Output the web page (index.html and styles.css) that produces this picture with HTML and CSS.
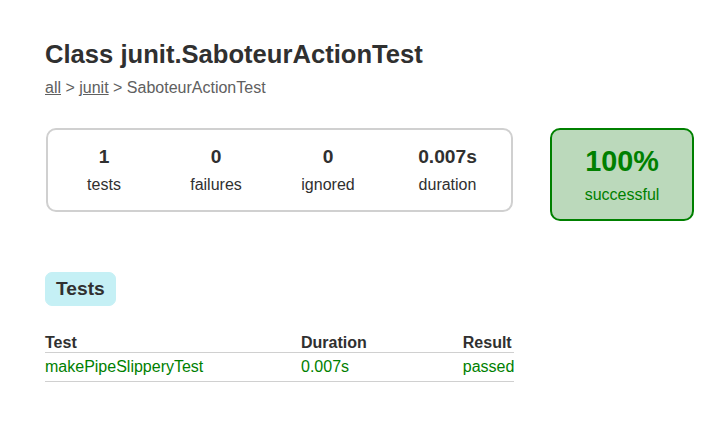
FILE: index.html
```html
<!DOCTYPE html>
<html>
<head>
<meta charset="utf-8">
<title>Test results - Class junit.SaboteurActionTest</title>
<link rel="stylesheet" href="styles.css">
</head>
<body>
<div class="content">
  <h1>Class junit.SaboteurActionTest</h1>
  <div class="breadcrumbs"><a href="#">all</a> &gt; <a href="#">junit</a> &gt; SaboteurActionTest</div>

  <div class="summary">
    <div class="summary-group">
      <div class="info-box">
        <div class="counter">1</div>
        <p>tests</p>
      </div>
      <div class="info-box">
        <div class="counter">0</div>
        <p>failures</p>
      </div>
      <div class="info-box">
        <div class="counter">0</div>
        <p>ignored</p>
      </div>
      <div class="info-box info-box-duration">
        <div class="counter">0.007s</div>
        <p>duration</p>
      </div>
    </div>
    <div class="info-box success-rate">
      <div class="percent">100%</div>
      <p>successful</p>
    </div>
  </div>

  <ul class="tab-links">
    <li class="tab-selected"><a href="#">Tests</a></li>
  </ul>

  <table class="tests">
    <thead>
      <tr><th>Test</th><th>Duration</th><th>Result</th></tr>
    </thead>
    <tbody>
      <tr class="success"><td>makePipeSlipperyTest</td><td>0.007s</td><td>passed</td></tr>
    </tbody>
  </table>
</div>
</body>
</html>
```

FILE: styles.css
```css
html, body {
  margin: 0;
  padding: 0;
  background: #ffffff;
}

body {
  font-family: "Liberation Sans", Arial, sans-serif;
  font-size: 16px;
  color: #303030;
}

a {
  color: #303030;
}

.content {
  padding: 40px 45px 30px;
}

h1 {
  font-size: 25.6px;
  font-weight: bold;
  margin: 0 0 10px;
  white-space: nowrap;
}

.breadcrumbs,
.breadcrumbs a {
  color: #606060;
}

.summary {
  display: flex;
  align-items: flex-start;
  margin: 30px 0 40px;
}

.summary-group {
  display: flex;
  flex-shrink: 0;
  margin: 1px;
  border: 2px solid #d0d0d0;
  border-radius: 10px;
}

.info-box {
  flex-shrink: 0;
  width: 110px;
  margin: 1px;
  padding: 15px 0;
  text-align: center;
}

.info-box p {
  margin: 0;
}

.info-box-duration {
  width: 125px;
}

.counter,
.percent {
  font-size: 19.2px;
  font-weight: bold;
  margin-bottom: 8px;
}

.success-rate {
  width: 140px;
  margin: 1px 1px 1px 36px;
  border: 2px solid #008000;
  border-radius: 10px;
  background-color: #bbd9bb;
  color: #008000;
}

.success-rate .percent {
  font-size: 28.8px;
}

.tab-links {
  list-style: none;
  margin: 0 0 18px;
  padding: 10px 0;
  display: flex;
}

.tab-links li {
  padding: 5px 10px;
  border: 1px solid #d4d4d4;
  border-radius: 7px;
  background-color: #f0f0f0;
}

.tab-links li.tab-selected {
  background-color: #c5f0f5;
  border-color: #c5f0f5;
}

.tab-links a {
  display: block;
  font-size: 19.2px;
  font-weight: bold;
  text-decoration: none;
  color: #303030;
}

.tests {
  border-collapse: collapse;
  min-width: 350px;
  border-bottom: 1px solid #d0d0d0;
}

.tests th {
  text-align: left;
  white-space: nowrap;
  padding: 0 0 0 96px;
  border-bottom: 1px solid #d0d0d0;
}

.tests td {
  white-space: nowrap;
  padding: 5px 0 5px 96px;
}

.tests th:first-child,
.tests td:first-child {
  padding-left: 0;
  min-width: 160px;
}

.tests tr.success td {
  color: #008000;
}
```
